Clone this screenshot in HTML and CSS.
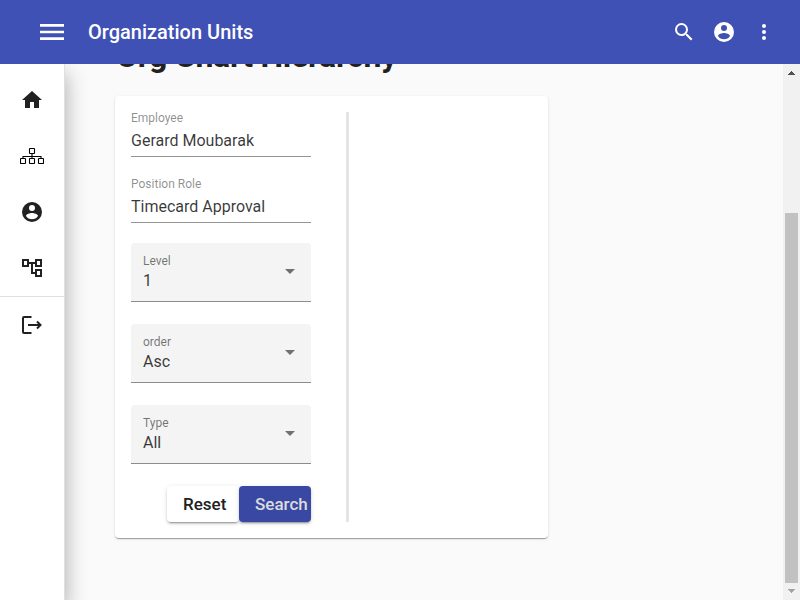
FILE: index.html
```html
<!DOCTYPE html>
<html lang="en">
<head>
<meta charset="utf-8">
<title>Organization Units</title>
<link rel="stylesheet" href="styles.css">
</head>
<body>
<header class="toolbar">
  <svg class="menu" width="24" height="16" viewBox="0 0 24 16"><path d="M0 0h24v2.67H0zM0 6.67h24v2.67H0zM0 13.33h24V16H0z"/></svg>
  <span class="title">Organization Units</span>
  <nav class="actions">
    <svg viewBox="0 0 24 24"><path d="M15.5 14h-.79l-.28-.27A6.471 6.471 0 0 0 16 9.5 6.5 6.5 0 1 0 9.5 16c1.61 0 3.09-.59 4.23-1.57l.27.28v.79l5 4.99L20.490 19l-4.990-5zm-6 0C7.010 14 5 11.990 5 9.500S7.010 5 9.500 5 14 7.010 14 9.500 11.990 14 9.500 14z"/></svg>
    <svg viewBox="0 0 24 24"><path d="M12 2a10 10 0 1 0 0 20 10 10 0 0 0 0-20zm0 3a3 3 0 1 1 0 6 3 3 0 0 1 0-6zm0 14.200a7.200 7.200 0 0 1-6-3.220c.03-1.990 4-3.080 6-3.080 1.990 0 5.970 1.090 6 3.080a7.200 7.200 0 0 1-6 3.220z" fill-rule="evenodd"/></svg>
    <svg viewBox="0 0 24 24"><circle cx="12" cy="6" r="2"/><circle cx="12" cy="12" r="2"/><circle cx="12" cy="18" r="2"/></svg>
  </nav>
</header>
<div class="body">
  <aside class="sidebar">
    <a class="item"><svg viewBox="0 0 24 24"><path d="M10 20v-6h4v6h5v-8h3L12 3 2 12h3v8z"/></svg></a>
    <a class="item"><svg class="sitemap" viewBox="0 0 24 24"><rect x="9.500" y="4.500" width="5" height="5" rx=".5"/><rect x=".5" y="14.500" width="5" height="5" rx=".5"/><rect x="9.500" y="14.500" width="5" height="5" rx=".5"/><rect x="18.500" y="14.500" width="5" height="5" rx=".5"/><path d="M12 9.500v5M3 14.500v-2h18v2"/></svg></a>
    <a class="item"><svg viewBox="0 0 24 24"><path d="M12 2a10 10 0 1 0 0 20 10 10 0 0 0 0-20zm0 3a3 3 0 1 1 0 6 3 3 0 0 1 0-6zm0 14.200a7.200 7.200 0 0 1-6-3.220c.03-1.990 4-3.080 6-3.080 1.990 0 5.970 1.090 6 3.080a7.200 7.200 0 0 1-6 3.220z" fill-rule="evenodd"/></svg></a>
    <a class="item"><svg viewBox="0 0 24 24"><path d="M22 11V3h-7v3H9V3H2v8h7V8h2v10h4v3h7v-8h-7v3h-2V8h2v3h7zM7 9H4V5h3v4zm10 6h3v4h-3v-4zm0-10h3v4h-3V5z" fill-rule="evenodd"/></svg></a>
    <hr class="rule">
    <a class="item"><svg class="logout" viewBox="0 0 24 24"><path d="M11.500 4H4Q3 4 3 5v14q0 1 1 1h7.500M8 12h12.500M17 8.500l3.500 3.500-3.500 3.500"/></svg></a>
  </aside>
  <main class="content">
    <h1>Org Chart Hierarchy</h1>
    <section class="card">
      <form class="filters">
        <div class="fields">
          <div class="field"><label>Employee</label><span>Gerard Moubarak</span></div>
          <div class="field"><label>Position Role</label><span>Timecard Approval</span></div>
        </div>
        <div class="select"><div><label>Level</label><span>1</span></div><i class="arrow"></i></div>
        <div class="select"><div><label>order</label><span>Asc</span></div><i class="arrow"></i></div>
        <div class="select"><div><label>Type</label><span>All</span></div><i class="arrow"></i></div>
        <div class="buttons">
          <button type="button" class="btn">Reset</button>
          <button type="button" class="btn primary">Search</button>
        </div>
      </form>
      <div class="divider"></div>
    </section>
  </main>
  <div class="scrollbar">
    <svg width="17" height="17" viewBox="0 0 17 17" shape-rendering="crispEdges"><path fill="#505050" d="M8 7h1v1h1v1h1v1h1v1H5v-1h1V9h1V8h1z"/></svg>
    <div class="thumb"></div>
    <svg width="17" height="17" viewBox="0 0 17 17" shape-rendering="crispEdges"><path fill="#a3a3a3" d="M5 6h7v1h-1v1h-1v1H9v1H8V9H7V8H6V7H5z"/></svg>
  </div>
</div>
</body>
</html>
```
FILE: styles.css
```css
* { box-sizing: border-box; }
body {
  margin: 0;
  height: 600px;
  overflow: hidden;
  display: flex;
  flex-direction: column;
  background: #fafafa;
  color: #212121;
  font-family: Roboto, sans-serif;
}
svg { display: block; fill: currentColor; }
.toolbar {
  flex: none;
  height: 64px;
  display: flex;
  align-items: center;
  padding: 0 24px 0 40px;
  background: #3f51b5;
  color: #fff;
}
.title {
  margin-left: 24px;
  font-size: 20px;
  font-weight: 500;
  line-height: 32px;
}
.actions { margin-left: auto; display: flex; gap: 16px; }
.actions svg { width: 24px; height: 24px; }
.body { flex: 1; min-height: 0; display: flex; overflow: hidden; }
.sidebar {
  flex: none;
  width: 65px;
  padding-top: 8px;
  background: #fff;
  border-right: 1px solid #e0e0e0;
  box-shadow: 0 10px 20px 1px rgba(0,0,0,.3);
}
.item { display: flex; height: 56px; align-items: center; justify-content: center; }
.item svg { width: 24px; height: 24px; }
.item .sitemap { fill: none; stroke: #000; stroke-width: 1.1; }
.item .logout { fill: none; stroke: currentColor; stroke-width: 2; }
.rule { margin: 0; border: 0; height: 1px; background: #e0e0e0; }
.content { flex: 1; padding-left: 50px; min-width: 0; }
h1 {
  margin: -27px 0 21px 1px;
  font-size: 32px;
  line-height: 38px;
  font-weight: 700;
  letter-spacing: -.25px;
}
.card {
  width: 433px;
  height: 442px;
  padding: 16px;
  display: flex;
  background: #fff;
  border-radius: 4px;
  box-shadow: 0 2px 1px -1px rgba(0,0,0,.2), 0 1px 1px 0 rgba(0,0,0,.14), 0 1px 3px 0 rgba(0,0,0,.12);
}
.filters { width: 180px; }
label { display: block; font-size: 12px; line-height: 14px; color: rgba(0,0,0,.46); }
.filters span { display: block; font-size: 16px; line-height: 18px; color: rgba(0,0,0,.78); }
.fields { display: flex; flex-direction: column; gap: 21px; margin-bottom: 20px; }
.field { height: 45px; border-bottom: 1px solid #949494; }
.field label { line-height: 12px; }
.field span { margin-top: 8px; }
.select {
  height: 59px;
  margin-bottom: 22px;
  padding: 11px 16px 0 12px;
  display: flex;
  justify-content: space-between;
  background: #f4f4f4;
  border-bottom: 1px solid #8c8c8c;
  border-radius: 4px 4px 0 0;
}
.select label { color: rgba(0,0,0,.54); }
.select span { margin-top: 4px; }
.arrow {
  width: 0;
  height: 0;
  margin-top: 15px;
  border: 5px solid transparent;
  border-top-color: #707070;
  border-bottom: 0;
}
.buttons { display: flex; justify-content: flex-end; }
.btn {
  width: 72px;
  height: 36px;
  padding: 0 0 0 16px;
  border: 0;
  border-radius: 4px;
  text-align: left;
  font: 500 17px/36px Roboto, sans-serif;
  background: #fff;
  color: #212121;
  box-shadow: 0 3px 1px -2px rgba(0,0,0,.2), 0 2px 2px 0 rgba(0,0,0,.14), 0 1px 5px 0 rgba(0,0,0,.12);
}
.primary { background: #3949a3; color: #dcdcdc; }
.divider { width: 3px; height: 410px; margin-left: 35px; background: #e5e5e5; }
.scrollbar {
  flex: none;
  width: 17px;
  display: flex;
  flex-direction: column;
  justify-content: space-between;
  background: #f1f1f1;
}
.thumb { height: 370px; margin: auto 2px 0; background: #c1c1c1; }

.toolbar, .scrollbar { position: relative; z-index: 1; }
```
